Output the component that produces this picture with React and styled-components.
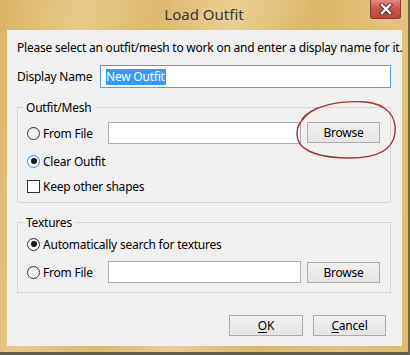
import React from 'react';
import styled, { createGlobalStyle } from 'styled-components';

const FONT = `"Segoe UI", "Noto Sans", sans-serif`;

const Global = createGlobalStyle`
  html, body { margin: 0; padding: 0; background: #fff; }
  body { width: 410px; height: 355px; overflow: hidden; }
  * { box-sizing: border-box; }
`;

const Window = styled.div`
  position: relative;
  width: 410px;
  height: 355px;
  display: flex;
  flex-direction: column;
  background: linear-gradient(100deg, #d8b464 0%, #e7cb8a 18%, #dbb96c 34%, #ead093 50%, #d9b667 68%, #e3c47e 85%, #dcba6d 100%);
  border-right: 2px solid #6f6650;
  border-bottom: 3px solid #625d52;
  font-family: ${FONT};
  font-size: 12px;
  letter-spacing: -0.22px;
  color: #000;
`;

const TitleBar = styled.div`
  height: 30px;
  display: grid;
  grid-template-columns: 1fr auto 1fr;
  align-items: start;
`;

const Title = styled.div`
  grid-column: 2;
  line-height: 29px;
  font-size: 15px;
  letter-spacing: 0;
  color: #3a3a3a;
`;

const CloseButton = styled.div`
  grid-column: 3;
  justify-self: end;
  margin-right: 7px;
  width: 31px;
  height: 19px;
  display: flex;
  align-items: center;
  justify-content: center;
  background: linear-gradient(#e28a80, #cc5650 45%, #c0443d);
  border: 1px solid #8e3530;
  border-top: none;
  border-radius: 0 0 3px 3px;
`;

const Client = styled.div`
  margin: 0 6px 6px 7px;
  height: 316px;
  background: #f0f0f0;
  padding: 10px 11px 0 10px;
  display: flex;
  flex-direction: column;
`;

const Intro = styled.div`
  line-height: 15px;
  white-space: nowrap;
`;

const FieldRow = styled.div`
  margin-top: 10px;
  height: 23px;
  display: flex;
  align-items: center;
`;

const FieldLabel = styled.span`
  width: 83px;
  line-height: 15px;
`;

const NameInput = styled.div`
  width: 291px;
  height: 23px;
  background: #fff;
  border: 1px solid #569de5;
  padding-left: 5px;
  display: flex;
  align-items: center;
`;

const Selected = styled.span`
  background: #3399ff;
  color: #fff;
  line-height: 16px;
  padding-right: 1px;
`;

const Group = styled.fieldset`
  margin: 12px 0 0;
  padding: ${p => p.$pt}px 10px ${p => p.$pb}px 9px;
  border: 1px solid #d5d5d5;
  min-width: 0;
  display: flex;
  flex-direction: column;
  gap: 9px;
`;

const Legend = styled.legend`
  padding: 0 3px;
  margin-left: -4px;
  line-height: 15px;
`;

const Row = styled.div`
  height: ${p => p.$h}px;
  display: flex;
  align-items: center;
`;

const Choice = styled.label`
  display: flex;
  align-items: center;
  gap: 3px;
  width: ${p => (p.$w ? `${p.$w}px` : 'auto')};
  line-height: 15px;
  white-space: nowrap;
`;

const RadioCircle = styled.span`
  width: 13px;
  height: 13px;
  border-radius: 50%;
  border: 1px solid ${p => (p.$focus ? '#3c8ee0' : '#333')};
  background: linear-gradient(#e9e9e9, #fff);
  display: flex;
  align-items: center;
  justify-content: center;
  flex: none;
  &::after {
    content: '';
    width: 6px;
    height: 6px;
    margin-top: 0.5px;
    border-radius: 50%;
    background: ${p => (p.$checked ? '#1a1a1a' : 'transparent')};
  }
`;

const CheckBox = styled.span`
  width: 13px;
  height: 13px;
  border: 1px solid #333;
  background: #fff;
  flex: none;
`;

const TextBox = styled.div`
  width: 193px;
  height: 22px;
  background: #fff;
  border: 1px solid #abadb3;
`;

const Button = styled.div`
  width: ${p => p.$w || 73}px;
  height: 21px;
  margin-left: ${p => p.$ml || 0}px;
  border: 1px solid #acacac;
  background: linear-gradient(#f0f0f0, #e5e5e5);
  display: flex;
  align-items: center;
  justify-content: center;
  line-height: 15px;
  align-self: ${p => p.$align || 'center'};
  u { text-decoration: underline; text-underline-offset: 2px; }
`;

const ButtonBar = styled.div`
  margin-top: 22px;
  display: flex;
  justify-content: flex-end;
  gap: 10px;
  padding-right: 5px;
`;

const Annotation = styled.svg`
  position: absolute;
  left: 0;
  top: 0;
  pointer-events: none;
`;

function Radio({ label, checked, focus, w }) {
  return (
    <Choice $w={w}>
      <RadioCircle $checked={checked} $focus={focus} />
      {label}
    </Choice>
  );
}

export default function App() {
  return (
    <>
      <Global />
      <Window>
        <TitleBar>
          <Title>Load Outfit</Title>
          <CloseButton>
            <svg width="14" height="12" viewBox="0 0 14 12">
              <path d="M3 2 L11 10 M11 2 L3 10" stroke="#4a2a2a" strokeWidth="4.2" strokeLinecap="square" />
              <path d="M3 2 L11 10 M11 2 L3 10" stroke="#fff" strokeWidth="2.4" strokeLinecap="square" />
            </svg>
          </CloseButton>
        </TitleBar>
        <Client>
          <Intro>Please select an outfit/mesh to work on and enter a display name for it.</Intro>
          <FieldRow>
            <FieldLabel>Display Name</FieldLabel>
            <NameInput>
              <Selected>New Outfit</Selected>
            </NameInput>
          </FieldRow>
          <Group $pt={7} $pb={8}>
            <Legend>Outfit/Mesh</Legend>
            <Row $h={22}>
              <Radio label="From File" w={81} />
              <TextBox />
              <Button $ml={6} $align="flex-start">Browse</Button>
            </Row>
            <Row $h={16}>
              <Radio label="Clear Outfit" checked focus />
            </Row>
            <Row $h={16}>
              <Choice>
                <CheckBox />
                Keep other shapes
              </Choice>
            </Row>
          </Group>
          <Group $pt={6} $pb={9}>
            <Legend>Textures</Legend>
            <Row $h={16}>
              <Radio label="Automatically search for textures" checked />
            </Row>
            <Row $h={22}>
              <Radio label="From File" w={81} />
              <TextBox />
              <Button $ml={6}>Browse</Button>
            </Row>
          </Group>
          <ButtonBar>
            <Button $w={74}><span><u>O</u>K</span></Button>
            <Button $w={73}><span><u>C</u>ancel</span></Button>
          </ButtonBar>
        </Client>
        <Annotation width="410" height="355" viewBox="0 0 410 355">
          <path
            d="M302 119 C312 106, 340 100, 366 102 C386 104, 397 116, 395 133 C393 149, 378 158, 350 158 C322 158, 302 152, 298 140 C295 131, 298 124, 304 118 C308 113, 313 110, 318 108"
            fill="none"
            stroke="#9a3535"
            strokeWidth="1.4"
            strokeLinecap="round"
          />
        </Annotation>
      </Window>
    </>
  );
}
